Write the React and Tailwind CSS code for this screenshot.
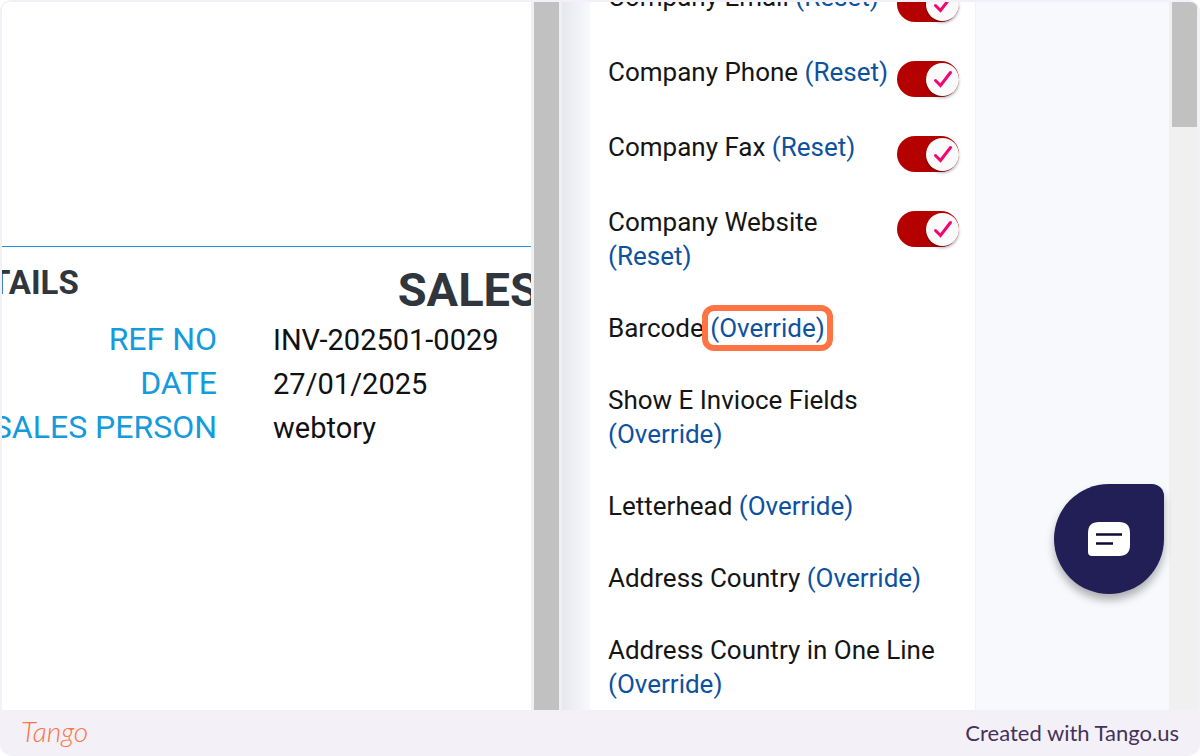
import React, { useState } from "react";

const initialFields = [
  { id: "email", label: "Company Email", action: "Reset", toggle: true },
  { id: "phone", label: "Company Phone", action: "Reset", toggle: true },
  { id: "fax", label: "Company Fax", action: "Reset", toggle: true },
  { id: "website", label: "Company Website", action: "Reset", toggle: true },
  { id: "barcode", label: "Barcode", action: "Override", highlight: true },
  { id: "einvoice", label: "Show E Invioce Fields", action: "Override" },
  { id: "letterhead", label: "Letterhead", action: "Override" },
  { id: "country", label: "Address Country", action: "Override" },
  { id: "countryLine", label: "Address Country in One Line", action: "Override" },
];

const details = [
  { label: "REF NO", value: "INV-202501-0029" },
  { label: "DATE", value: "27/01/2025" },
  { label: "SALES PERSON", value: "webtory" },
];

const Toggle = ({ id, label }) => {
  const [on, setOn] = useState(true);

  return (
    <label
      htmlFor={id}
      className={`mt-1.5 flex h-9 w-[62px] shrink-0 cursor-pointer items-center rounded-full ${
        on ? "justify-end bg-[#b50000]" : "justify-start bg-gray-400"
      }`}
    >
      <input
        id={id}
        type="checkbox"
        checked={on}
        onChange={(e) => setOn(e.target.checked)}
        aria-label={label}
        className="sr-only"
      />
      <span className="flex size-[33px] items-center justify-center rounded-full bg-[#fafafa] shadow-[0_2px_3px_rgba(0,0,0,0.3)]">
        {on && (
          <svg viewBox="0 0 20 20" className="size-5" fill="none" stroke="#f5056e" strokeWidth="3">
            <path d="M2.500 11.500 L7.500 16.500 L17.500 3.500" strokeLinecap="round" />
          </svg>
        )}
      </span>
    </label>
  );
};

const FieldRow = ({ field }) => (
  <li className="flex items-start justify-between">
    <p className="min-w-0 flex-1 pb-[5px] text-[26px] leading-[34px] text-[#151515]">
      {field.label}{" "}
      <span className="relative inline-block">
        <a href="#" className="text-[#0d519f]">
          ({field.action})
        </a>
        {field.highlight && (
          <span className="pointer-events-none absolute -inset-x-2 -inset-y-1.5 rounded-xl border-6 border-[#ff7442]" />
        )}
      </span>
    </p>
    {field.toggle && <Toggle id={field.id} label={field.label} />}
  </li>
);

const InvoicePreview = () => (
  <section className="min-w-0 flex-1 overflow-hidden bg-white pt-[244px]">
    <div className="border-t border-[#159bdc] pt-4">
      <div className="flex justify-between whitespace-nowrap">
        <h2 className="-ml-3 text-[33px] leading-10 font-bold text-[#2f363d]">TAILS</h2>
        <h1 className="-mr-2 text-[47px] leading-[54px] font-bold text-[#2f363d]">SALES</h1>
      </div>
      <dl>
        {details.map((item) => (
          <div key={item.label} className="flex h-11 items-center gap-14 whitespace-nowrap">
            <dt className="flex w-[215px] shrink-0 justify-end text-[32px] text-[#159bdc]">
              {item.label}
            </dt>
            <dd className="pt-1 text-[29px] text-[#111111]">{item.value}</dd>
          </div>
        ))}
      </dl>
    </div>
  </section>
);

const App = () => {
  return (
    <div className="flex h-screen flex-col overflow-hidden rounded-xl bg-[#f3f1f7] font-[Roboto,sans-serif]">
      <main className="relative mx-0.5 mt-0.5 flex min-h-0 flex-1 overflow-hidden rounded-t-lg bg-[#f8f9fd]">
        <InvoicePreview />
        <div className="w-[31px] shrink-0 border-r-3 border-l-3 border-[#f0f0f0] bg-[#c1c1c1]" />
        <div className="w-7 shrink-0 bg-linear-to-r from-[#e6e8ed] to-[#f8f9fd]" />

        <aside className="w-[385px] shrink-0 bg-white pr-4 pl-[18px]">
          <ul className="-mt-[22px] flex flex-col gap-[33px]">
            {initialFields.map((field) => (
              <FieldRow key={field.id} field={field} />
            ))}
          </ul>
        </aside>

        <div className="w-[194px] shrink-0 border-l border-[#f1f2f6]" />
        <div className="w-[29px] shrink-0 bg-[#f0f0f0] pr-px pl-[3px]">
          <div className="h-[125px] bg-[#c1c1c1]" />
        </div>

        <button
          type="button"
          aria-label="Open chat"
          className="absolute right-[34px] bottom-[116px] flex size-[110px] items-center justify-center rounded-[55px] rounded-tr-xl bg-[#221e56] shadow-[0_6px_8px_rgba(0,0,0,0.3)]"
        >
          <svg viewBox="0 0 42 34" className="h-[34px] w-[42px]">
            <path
              d="M11 0 H31 Q42 0 42 11 V23 Q42 34 31 34 H4 Q0 34 0 30 V11 Q0 0 11 0 Z"
              fill="#ffffff"
            />
            <path d="M8 12.500 H34 M8 21.500 H25" stroke="#0d0b33" strokeWidth="2.500" />
          </svg>
        </button>
      </main>

      <footer className="flex h-[46px] shrink-0 items-center justify-between px-[21px]">
        <a
          href="#"
          className="relative pb-1 font-[Lato,sans-serif] text-[28px] leading-9 font-light text-[#ff7442] italic"
        >
          Tango
        </a>
        <p className="font-[Lato,sans-serif] text-[22px] leading-7 text-[#45325c]">
          Created with Tango.us
        </p>
      </footer>
    </div>
  );
};

export default App;
